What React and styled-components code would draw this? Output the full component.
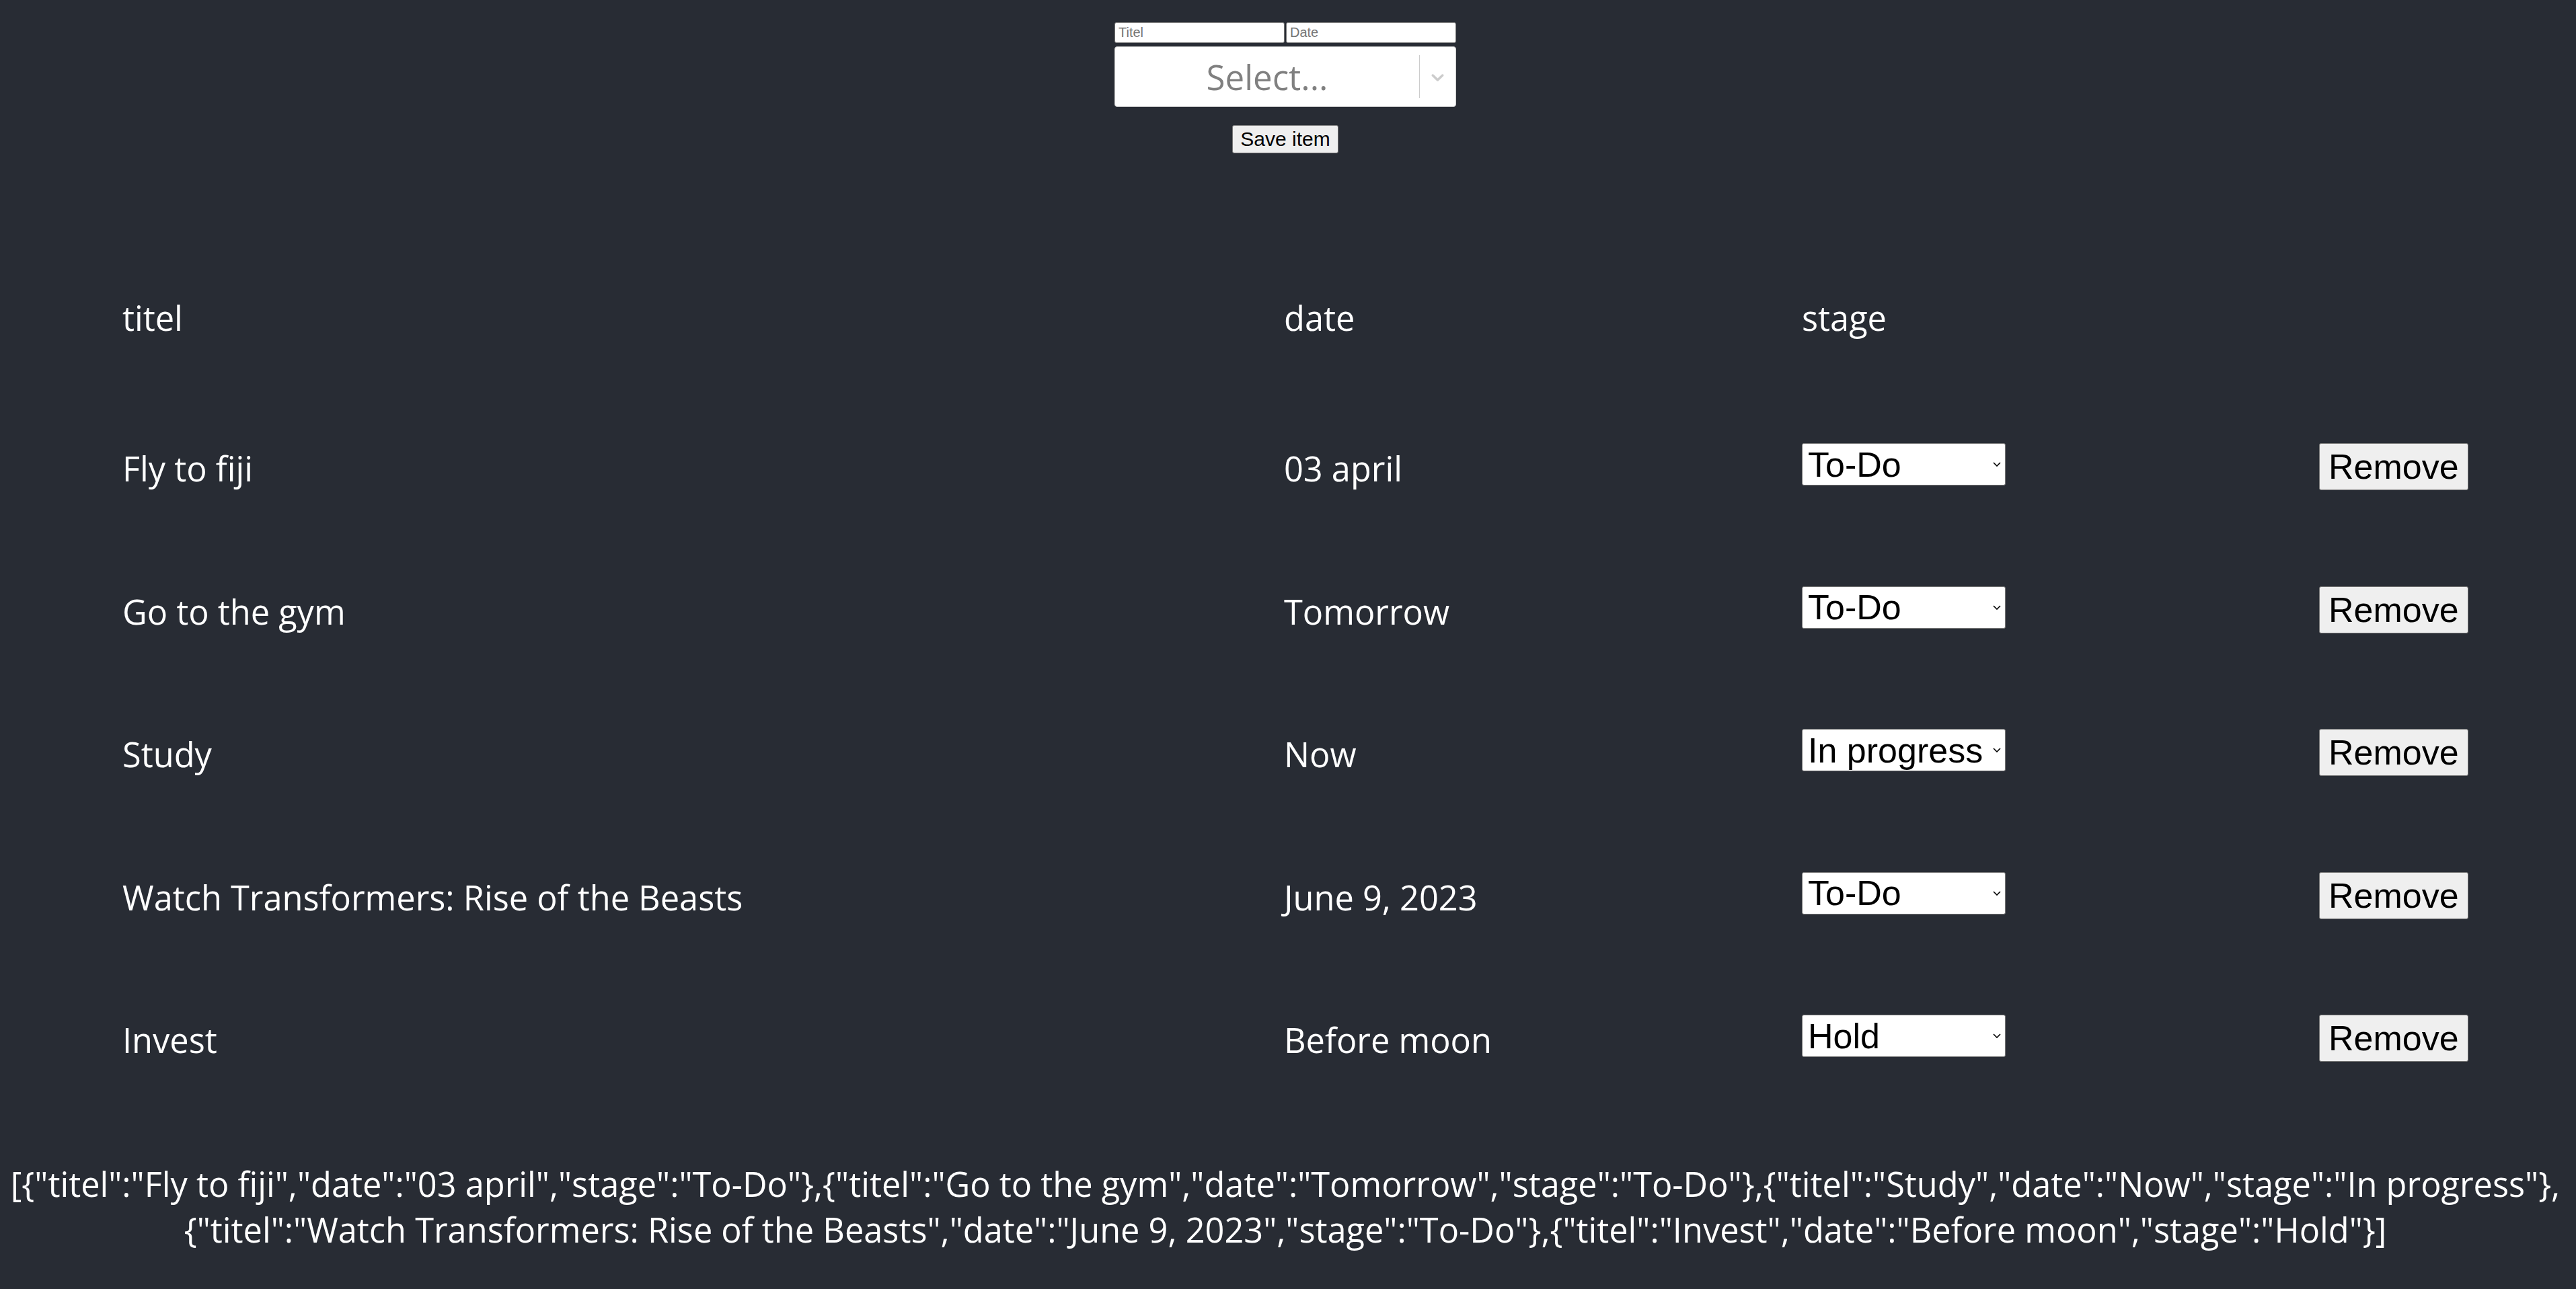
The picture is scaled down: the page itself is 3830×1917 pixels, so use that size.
import React, { useState } from "react"
import styled, { createGlobalStyle } from "styled-components"

const initialItems = [
  { titel: "Fly to fiji", date: "03 april", stage: "To-Do" },
  { titel: "Go to the gym", date: "Tomorrow", stage: "To-Do" },
  { titel: "Study", date: "Now", stage: "In progress" },
  { titel: "Watch Transformers: Rise of the Beasts", date: "June 9, 2023", stage: "To-Do" },
  { titel: "Invest", date: "Before moon", stage: "Hold" },
]

const stages = ["To-Do", "In progress", "Hold", "Done"]

const App = () => {
  const [items, setItems] = useState(initialItems)
  const [titel, setTitel] = useState("")
  const [date, setDate] = useState("")

  const saveItem = e => {
    e.preventDefault()
    if (!titel) return
    setItems([...items, { titel, date, stage: "To-Do" }])
    setTitel("")
    setDate("")
  }

  const changeStage = (index, stage) =>
    setItems(items.map((item, i) => (i === index ? { ...item, stage } : item)))

  const removeItem = index => setItems(items.filter((_, i) => i !== index))

  return (
    <Page>
      <GlobalStyle />
      <Form onSubmit={saveItem}>
        <InputRow>
          <TextInput
            placeholder="Titel"
            value={titel}
            onChange={e => setTitel(e.target.value)}
          />
          <TextInput
            placeholder="Date"
            value={date}
            onChange={e => setDate(e.target.value)}
          />
        </InputRow>
        <StageControl>
          <Placeholder>Select...</Placeholder>
          <IndicatorSeparator />
          <Indicator>
            <svg width="31" height="31" viewBox="0 0 20 20" fill="currentColor">
              <path d="M4.516 7.548c0.436-0.446 1.043-0.481 1.576 0l3.908 3.747 3.908-3.747c0.533-0.481 1.141-0.446 1.574 0 0.436 0.445 0.408 1.197 0 1.615-0.406 0.418-4.695 4.502-4.695 4.502-0.217 0.223-0.502 0.335-0.787 0.335s-0.57-0.112-0.789-0.335c0 0-4.287-4.084-4.695-4.502s-0.436-1.17 0-1.615z" />
            </svg>
          </Indicator>
        </StageControl>
        <SaveButton type="submit">Save item</SaveButton>
      </Form>

      <Board>
        <HeaderRow>
          <Cell>titel</Cell>
          <Cell>date</Cell>
          <Cell>stage</Cell>
          <Cell />
        </HeaderRow>
        {items.map((item, index) => (
          <Row key={index.toString()}>
            <Cell>{item.titel}</Cell>
            <Cell>{item.date}</Cell>
            <SelectWrap>
              <StageSelect
                value={item.stage}
                onChange={e => changeStage(index, e.target.value)}
              >
                {stages.map(stage => (
                  <option key={stage} value={stage}>
                    {stage}
                  </option>
                ))}
              </StageSelect>
              <SelectArrow width="12" height="7" viewBox="0 0 12 7">
                <path d="M1 1l5 5 5-5" fill="none" stroke="#000" strokeWidth="1.6" />
              </SelectArrow>
            </SelectWrap>
            <div>
              <RemoveButton onClick={() => removeItem(index)}>Remove</RemoveButton>
            </div>
          </Row>
        ))}
      </Board>

      <JsonDump>{JSON.stringify(items)}</JsonDump>
    </Page>
  )
}

const GlobalStyle = createGlobalStyle`
  body {
    margin: 8px;
    background: #282c34;
    color: #ffffff;
    font-family: "Open Sans", "Noto Sans", sans-serif;
  }
`

const Page = styled.div`
  padding-right: 8px;
`

const Form = styled.form`
  display: flex;
  flex-direction: column;
  align-items: center;
  width: 508px;
  margin: 25px auto 0 auto;
`

const InputRow = styled.div`
  display: flex;
  gap: 2px;
`

const TextInput = styled.input`
  box-sizing: border-box;
  width: 253px;
  height: 31px;
  padding: 1px 5px;
  font-family: "Liberation Sans", Arial, sans-serif;
  font-size: 20px;
  color: #000;
  background: #fff;
  border: 1px solid #767676;
  border-radius: 3px;

  &::placeholder {
    color: #757575;
  }
`

const StageControl = styled.div`
  box-sizing: border-box;
  display: flex;
  align-items: center;
  width: 508px;
  height: 90px;
  margin-top: 5px;
  background: #fff;
  border: 1px solid #cccccc;
  border-radius: 4px;
`

const Placeholder = styled.div`
  flex: 1;
  text-align: center;
  color: #808080;
  font-size: 51px;
`

const IndicatorSeparator = styled.span`
  align-self: stretch;
  width: 1px;
  margin: 12px 0;
  background: #cccccc;
`

const Indicator = styled.div`
  display: flex;
  justify-content: center;
  align-items: center;
  width: 53px;
  color: #cccccc;
`

const ButtonBase = styled.button`
  font-family: "Liberation Sans", Arial, sans-serif;
  color: #000;
  background: #efefef;
  border: 1px solid #767676;
  border-radius: 3px;
  cursor: pointer;
`

const SaveButton = styled(ButtonBase)`
  margin-top: 27px;
  padding: 3px 11px;
  font-size: 30px;
`

const RemoveButton = styled(ButtonBase)`
  padding: 4px 13px;
  font-size: 52px;
  line-height: normal;
`

const Board = styled.div`
  display: flex;
  flex-direction: column;
  gap: 142.5px;
  margin-top: 207px;
  padding-left: 174px;
`

const Row = styled.div`
  display: grid;
  grid-template-columns: 1727px 770px 769px auto;
  align-items: start;
  height: 70px;
`

const HeaderRow = styled(Row)`
  margin-bottom: 11.5px;
`

const Cell = styled.div`
  padding-top: 6px;
  font-size: 50.5px;
  line-height: 64px;
  white-space: nowrap;
`

const SelectWrap = styled.div`
  position: relative;
  width: 303px;
`

const StageSelect = styled.select`
  appearance: none;
  box-sizing: border-box;
  width: 303px;
  height: 63px;
  padding: 0 24px 0 8px;
  font-family: "Liberation Sans", Arial, sans-serif;
  font-size: 52px;
  color: #000;
  background: #fff;
  border: 1px solid #767676;
  border-radius: 3px;
`

const SelectArrow = styled.svg`
  position: absolute;
  right: 7px;
  top: 28px;
  pointer-events: none;
`

const JsonDump = styled.div`
  margin-top: 148px;
  text-align: center;
  font-size: 50.5px;
  line-height: 68px;
`

export default App
